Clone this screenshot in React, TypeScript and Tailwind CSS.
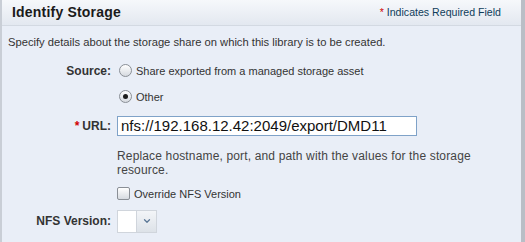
import { ChevronDown } from 'lucide-react';

const sans = "font-['Liberation_Sans','Arial',sans-serif]";
const bold = "font-['Liberation_Sans','Arial',sans-serif] font-bold";

function Radio({ checked }: { checked?: boolean }) {
  return (
    <span className="w-[13px] h-[13px] rounded-full border border-[#8a8f96] bg-gradient-to-b from-[#ffffff] to-[#d6dae0] flex items-center justify-center shrink-0">
      {checked && <span className="w-[5px] h-[5px] rounded-full bg-[#1c1c1c]" />}
    </span>
  );
}

export default function App() {
  return (
    <div className={`w-[525px] h-[242px] bg-[#e9eef7] border-l-2 border-[#c9ced6] border-r-4 border-r-[#b9bec6] overflow-hidden ${sans}`}>
      {/* header */}
      <div className="h-[26px] flex items-center justify-between pl-[10px] pr-[20px] bg-gradient-to-b from-[#f6f8fb] to-[#e3e8f0] border-b border-[#d3d9e2]">
        <div className={`${bold} text-[14px] text-[#1a1a1a] tracking-[0.2px]`}>Identify Storage</div>
        <div className="text-[10.6px] text-[#0f3d5a]"><span className="text-[#d10000] mr-[3px]">*</span>Indicates Required Field</div>
      </div>

      <div className="pl-[6px] pt-[8px] text-[11.2px] text-[#333333]">
        Specify details about the storage share on which this library is to be created.
      </div>

      <div className="grid grid-cols-[109px_1fr] gap-x-[6px] mt-[12px] text-[11px] text-[#333]">
        <div className={`${bold} text-[12px] text-right h-[16px] leading-[16px] text-[#333]`}>Source:</div>
        <div className="flex flex-col gap-[10px] pl-[2px]">
          <label className="flex items-center gap-[4px] h-[16px]"><Radio />Share exported from a managed storage asset</label>
          <label className="flex items-center gap-[4px] h-[16px]"><Radio checked />Other</label>
        </div>

        <div className={`${bold} text-[12px] text-right mt-[11px] h-[20px] leading-[20px] text-[#333]`}>
          <span className="text-[#d10000] mr-[3px]">*</span>URL:
        </div>
        <div className="mt-[11px]">
          <div className="w-[300px] h-[20px] bg-white border border-[#7fa2c8] flex items-center pl-[3px] text-[15px] leading-none text-[#111]">
            nfs://192.168.12.42:2049/export/DMD11
          </div>
          <div className="mt-[13px] text-[12px] leading-[14px] tracking-[0.15px] text-[#444] w-[370px]">
            Replace hostname, port, and path with the values for the storage resource.
          </div>
          <label className="mt-[10px] flex items-center gap-[4px] h-[14px] text-[11px]">
            <span className="w-[13px] h-[13px] rounded-[2px] border border-[#8a8f96] bg-gradient-to-b from-[#ffffff] to-[#d6dae0]" />
            Override NFS Version
          </label>
        </div>

        <div className={`${bold} text-[12px] text-right mt-[9px] h-[23px] leading-[23px] text-[#333]`}>NFS Version:</div>
        <div className="mt-[9px] flex h-[23px] w-[40px] border border-[#d0d5dc]">
          <div className="flex-1 bg-white" />
          <div className="w-[20px] bg-gradient-to-b from-[#f3f5f8] to-[#dde2e8] border-l border-[#d0d5dc] flex items-center justify-center">
            <ChevronDown className="w-[10px] h-[10px] text-[#5b7796]" strokeWidth={3} />
          </div>
        </div>
      </div>
    </div>
  );
}
